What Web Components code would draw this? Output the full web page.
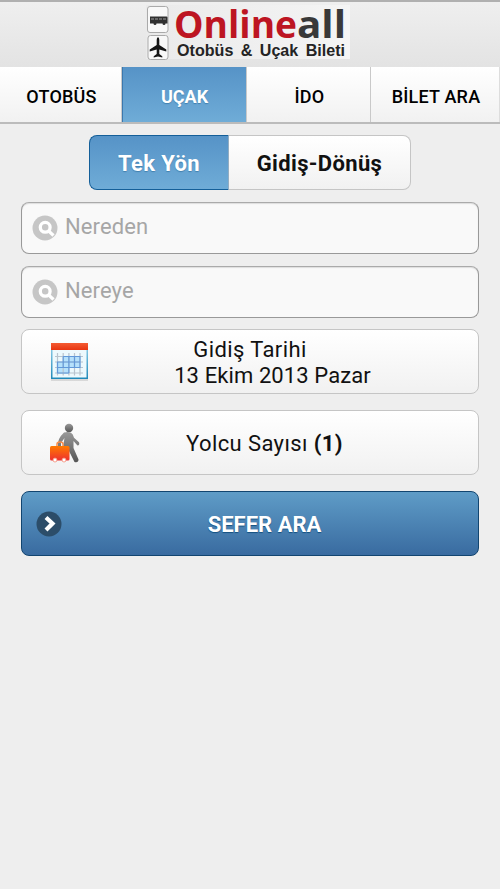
<!DOCTYPE html>
<html lang="tr"><head><meta charset="utf-8"><title>Onlineall</title>
<style>
html,body{margin:0;height:100%}
body{background:#eee;font-family:Roboto,"Noto Sans",sans-serif;color:#111}
</style></head><body>
<booking-app></booking-app>
<script>
function define(name, html){
  const t=document.createElement('template'); t.innerHTML=html;
  customElements.define(name, class extends HTMLElement{
    constructor(){super();this.attachShadow({mode:'open'}).append(t.content.cloneNode(true));}
  });
}
define('brand-logo', `<style>:host{display:block;width:210px;height:66px}svg{display:block;overflow:visible}</style>
<svg width="210" height="66" viewBox="145 0 210 66">
<defs><linearGradient id="g" x1="0" y1="0" x2="1" y2="0"><stop offset="0" stop-color="#eaeaea"/><stop offset=".8" stop-color="#f2f2f2"/><stop offset="1" stop-color="#f5f5f5"/></linearGradient></defs>
<rect x="146" y="5" width="204" height="54" fill="url(#g)"/>
<g fill="#f8f8f8" stroke="#aaa"><rect x="147.500" y="6.500" width="20.500" height="26" rx="2.500"/><rect x="148" y="35.500" width="20" height="24" rx="2.500"/></g>
<path d="M150 16.500h16.500q1 0 1 1v6h-2a1.500 1.500 0 0 1-3 0h-6a1.500 1.500 0 0 1-3 0H150z" fill="#303030"/>
<path d="M151 18h3v2h-3zm4 0h3v2h-3zm4 0h3v2h-3zm4 0h3v2h-3z" fill="#666"/>
<path d="M158 37q1.300 1 1.300 3v5l7 4.500v2l-7-2v4.500l3 2.200v1.200l-4.300-1-4.300 1v-1.200l3-2.200v-4.500l-7 2v-2l7-4.500v-5q0-2 1.300-3z" fill="#151515"/>
<g font-family="Open Sans" font-size="37.500" font-weight="700"><text x="174" y="37.500" textLength="123" lengthAdjust="spacingAndGlyphs" fill="#bd1522">Online</text><text x="297" y="37.500" textLength="49" lengthAdjust="spacingAndGlyphs" fill="#393939">all</text></g>
<text x="177" y="55.500" font-family="Liberation Sans" font-size="16.500" font-weight="700" word-spacing="3" textLength="168" lengthAdjust="spacingAndGlyphs" fill="#242424">Otobüs &amp; Uçak Bileti</text>
</svg>`);
define('app-header', `<style>:host{display:flex;justify-content:center;height:67px;box-sizing:border-box;border-top:2px solid #b0b0b0;background:linear-gradient(#efefef,#e3e3e3)}brand-logo{margin-top:-2px;margin-left:0}</style><brand-logo></brand-logo>`);
define('nav-tab', `<style>:host{display:flex;align-items:center;justify-content:center;box-sizing:border-box;padding-top:4px;padding-left:2px;font-size:18px;font-weight:500;letter-spacing:.2px;color:#000;background:linear-gradient(#fff,#f1f1f1);border-right:1px solid #c9c9c9}
:host([active]){color:#fff;font-weight:700;letter-spacing:0;background:linear-gradient(#5693c7,#6facd7);border-left:1px solid #3b78ae;padding-left:0;text-shadow:0 1px 1px #4380ae}
:host([last]){border-right-color:#ddd}</style><span><slot></slot></span>`);
define('nav-tabs', `<style>:host{display:grid;grid-template-columns:122px 125px 124px 129px;height:57px;box-sizing:border-box;border-bottom:2px solid #bbb}</style><slot></slot>`);
define('toggle-option', `<style>:host{display:flex;align-items:center;justify-content:center;box-sizing:border-box;padding-top:1px;border:1px solid #c5c5c5;border-left:0;border-radius:0 8px 8px 0;background:linear-gradient(#fff,#f1f1f1);font-size:22px;font-weight:700;letter-spacing:.35px}
:host([active]){color:#fff;background:linear-gradient(#5693c7,#6facd7);border:1px solid #145f99;border-right-color:#93adc2;border-radius:8px 0 0 8px;text-shadow:0 1px 1px #4380ae}</style><slot></slot>`);
define('toggle-group', `<style>:host{display:grid;grid-template-columns:140px 182px;height:55px;width:322px;margin:0 auto 12px}</style><slot></slot>`);
define('search-field', `<style>:host{display:flex;align-items:center;box-sizing:border-box;height:52px;border:1px solid #999;border-top:1px solid #aaa;border-radius:8px;background:#f9f9f9;margin-bottom:12px;padding-left:10px;color:#a6a6a6;font-size:22px;box-shadow:inset 0 1px 1px #ddd}
svg{margin-right:7px}span{margin-top:-4px;letter-spacing:.1px}</style><svg width="26" height="26" viewBox="0 0 26 26"><circle cx="13" cy="13" r="12.500" fill="#c6c6c6"/><circle cx="13.200" cy="12.300" r="4.900" fill="none" stroke="#fff" stroke-width="3.300"/><path d="M16.500 15.800l5 4.700" stroke="#fff" stroke-width="3.200"/></svg><span><slot></slot></span>`);
define('row-button', `<style>:host{display:grid;place-items:center;position:relative;box-sizing:border-box;height:65px;border:1px solid #c5c5c5;border-radius:8px;background:linear-gradient(#fff,#f1f1f1);font-size:22px;line-height:26px;text-align:center;margin-bottom:16px}
:host([primary]){border-color:#124570;background:linear-gradient(#5f9cc7,#396ba0);color:#fff;font-weight:700;text-shadow:0 1px 1px #145080}
:host([indent]){padding-left:29px}
div{padding-top:2px}::slotted([slot=icon]){position:absolute}</style><slot name="icon"></slot><div><slot></slot></div>`);
define('calendar-icon', `<style>:host{left:28px;top:12px}svg{display:block}</style><svg width="40" height="41" viewBox="50 342 40 41">
<defs><linearGradient id="r" x2="0" y2="1"><stop stop-color="#f45b32"/><stop offset="1" stop-color="#e83410"/></linearGradient><linearGradient id="b" x2="0" y2="1"><stop stop-color="#83c7e3"/><stop offset="1" stop-color="#2089b9"/></linearGradient></defs>
<path d="M51 379.500h37v1H51z" fill="#aaa" opacity=".7"/><rect x="51" y="349" width="37" height="30" fill="url(#b)"/><path d="M52.500 350h34v27.500h-34z" fill="#edf9fd"/><rect x="51" y="343" width="37" height="7" fill="url(#r)"/>
<path d="M63 356h17v12H69v6H57.500v-12H63z" fill="#b5e1fc"/><path d="M57.500 353v22.500m5.700-22.500v22.500m5.700-22.500v22.500m5.600-22.500v22.500m5.500-22.500v22.500M55 356.500h28m-28 5.500h28m-28 5.500h28M55 373h28" fill="none" stroke="#b8c4ce" stroke-width="1.200"/>
<path d="M63.200 356.500H80v11H57.500V362H80m-16.800-5.500v11m5.700-11v16.500m5.600-16.500v11M80 356.500v11m-22.500-5.500v11h11.400" fill="none" stroke="#468bdc" stroke-width="1.200" opacity=".75"/></svg>`);
define('traveler-icon', `<style>:host{left:27px;top:11px}svg{display:block}</style><svg width="32" height="42" viewBox="49 422 32 42">
<defs><linearGradient id="m" x2="0" y2="1"><stop stop-color="#999"/><stop offset="1" stop-color="#555"/></linearGradient><linearGradient id="o" x2="0" y2="1"><stop stop-color="#ff7a00"/><stop offset="1" stop-color="#ee3030"/></linearGradient></defs>
<circle cx="69" cy="428" r="4.200" fill="url(#m)"/>
<path d="M64 432.500q4-1.200 7 .2 2 1 3 5l5 4.500q1 3-1.500 3.200L73.500 441v7l5 11.500q0 3.500-4 2.500l-5.500-11-4 4-3-2 2.500-15-3.500 5v4l-3-1q-1-7 6-13.500z" fill="url(#m)"/>
<path d="M57 447v-3q0-2 3-2t3 2v3" fill="none" stroke="#fb8e49" stroke-width="1.500"/><rect x="50" y="446" width="19.500" height="14.500" rx="1.500" fill="url(#o)"/><g fill="#fff" stroke="#f58b74" stroke-width=".8"><circle cx="55" cy="460" r="2"/><circle cx="64" cy="460" r="2"/></g></svg>`);
define('arrow-icon', `<style>:host{left:14px;top:19px}svg{display:block}</style><svg width="26" height="26" viewBox="0 0 26 26"><circle cx="13" cy="13" r="12.500" fill="#2c4d69"/><path d="M10 6.500l6.500 6-6.500 6.500" fill="none" stroke="#fff" stroke-width="4.200"/></svg>`);
define('booking-app', `<style>:host{display:block}main{padding:11px 21px}b{font-weight:700}
.w{letter-spacing:.4px}.date{margin-left:45px;letter-spacing:.1px}.short{margin-bottom:11px}</style>
<app-header></app-header>
<nav-tabs><nav-tab>OTOBÜS</nav-tab><nav-tab active>UÇAK</nav-tab><nav-tab>İDO</nav-tab><nav-tab last>BİLET ARA</nav-tab></nav-tabs>
<main><toggle-group><toggle-option active>Tek Yön</toggle-option><toggle-option>Gidiş-Dönüş</toggle-option></toggle-group>
<search-field>Nereden</search-field><search-field class="short">Nereye</search-field>
<row-button class="w"><calendar-icon slot="icon"></calendar-icon>Gidiş Tarihi<br><span class="date">13 Ekim 2013 Pazar</span></row-button>
<row-button indent class="w"><traveler-icon slot="icon"></traveler-icon>Yolcu Sayısı <b>(1)</b></row-button>
<row-button indent primary><arrow-icon slot="icon"></arrow-icon>SEFER ARA</row-button></main>`);
</script></body></html>
